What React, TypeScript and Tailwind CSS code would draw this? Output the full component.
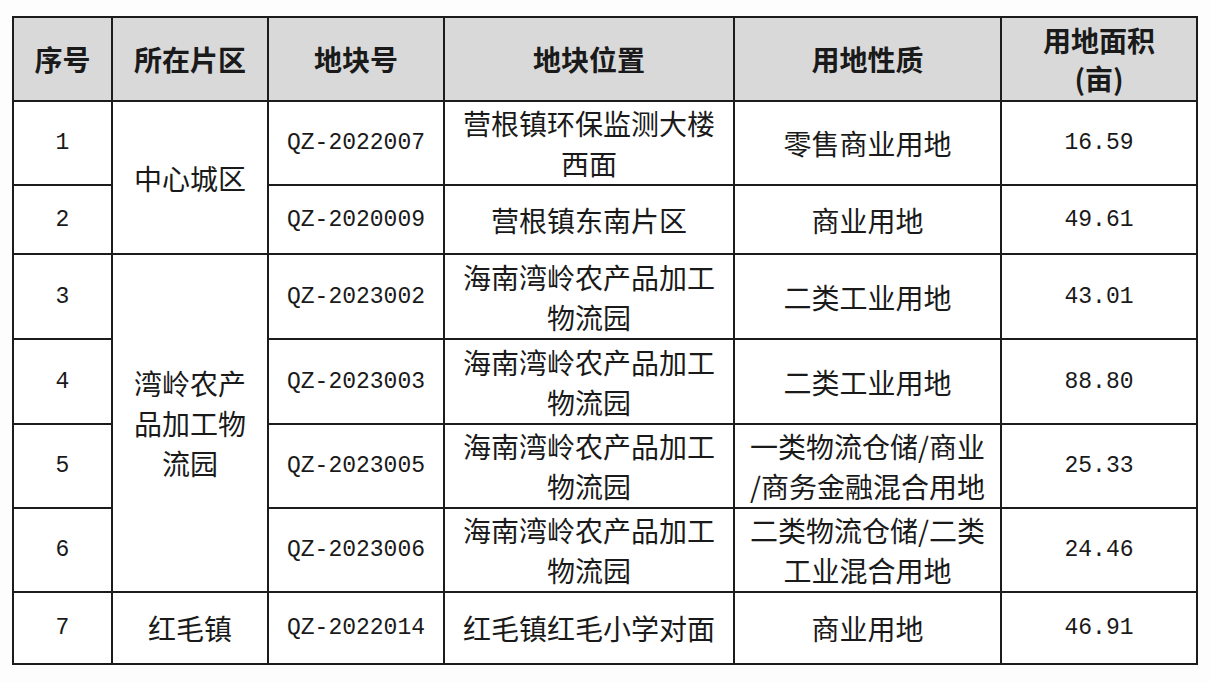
import React from "react";

const CJK = '"Noto Sans CJK SC", "Noto Sans", sans-serif';
const MONO = '"Liberation Mono", "DejaVu Sans Mono", monospace';

type Row = {
  no: string;
  area?: { text: React.ReactNode; span: number };
  code: string;
  loc: React.ReactNode;
  use: React.ReactNode;
  size: string;
  h: string;
};

const ROWS: Row[] = [
  {
    no: "1",
    area: { text: "中心城区", span: 2 },
    code: "QZ-2022007",
    loc: (
      <>
        营根镇环保监测大楼
        <br />
        西面
      </>
    ),
    use: "零售商业用地",
    size: "16.59",
    h: "h-[84px]",
  },
  { no: "2", code: "QZ-2020009", loc: "营根镇东南片区", use: "商业用地", size: "49.61", h: "h-[69px]" },
  {
    no: "3",
    area: {
      text: (
        <>
          湾岭农产
          <br />
          品加工物
          <br />
          流园
        </>
      ),
      span: 4,
    },
    code: "QZ-2023002",
    loc: (
      <>
        海南湾岭农产品加工
        <br />
        物流园
      </>
    ),
    use: "二类工业用地",
    size: "43.01",
    h: "h-[85px]",
  },
  {
    no: "4",
    code: "QZ-2023003",
    loc: (
      <>
        海南湾岭农产品加工
        <br />
        物流园
      </>
    ),
    use: "二类工业用地",
    size: "88.80",
    h: "h-[85px]",
  },
  {
    no: "5",
    code: "QZ-2023005",
    loc: (
      <>
        海南湾岭农产品加工
        <br />
        物流园
      </>
    ),
    use: (
      <>
        一类物流仓储/商业
        <br />
        /商务金融混合用地
      </>
    ),
    size: "25.33",
    h: "h-[84px]",
  },
  {
    no: "6",
    code: "QZ-2023006",
    loc: (
      <>
        海南湾岭农产品加工
        <br />
        物流园
      </>
    ),
    use: (
      <>
        二类物流仓储/二类
        <br />
        工业混合用地
      </>
    ),
    size: "24.46",
    h: "h-[84px]",
  },
  {
    no: "7",
    area: { text: "红毛镇", span: 1 },
    code: "QZ-2022014",
    loc: "红毛镇红毛小学对面",
    use: "商业用地",
    size: "46.91",
    h: "h-[72px]",
  },
];

const cell = "border-2 border-[#1c1c1c] text-center align-middle p-0";

export default function App() {
  return (
    <div className="w-[1210px] h-[682px] bg-[#fdfdfd] pt-[16px] pl-[12px]">
      <table
        className="table-fixed border-collapse w-[1184px] text-[#1a1a1a]"
        style={{ fontFamily: CJK }}
      >
        <colgroup>
          <col className="w-[99px]" />
          <col className="w-[156px]" />
          <col className="w-[176px]" />
          <col className="w-[290px]" />
          <col className="w-[267px]" />
          <col className="w-[196px]" />
        </colgroup>
        <thead>
          <tr className="h-[84px] bg-[#d9d9d9] text-[28px] font-bold leading-[38px]">
            <th className={cell}>序号</th>
            <th className={cell}>所在片区</th>
            <th className={cell}>地块号</th>
            <th className={cell}>地块位置</th>
            <th className={cell}>用地性质</th>
            <th className={cell}>
              用地面积
              <br />
              (亩)
            </th>
          </tr>
        </thead>
        <tbody className="bg-white">
          {ROWS.map((r) => (
            <tr key={r.no} className={`${r.h} text-[28px] leading-[40px]`}>
              <td className={`${cell} text-[23px]`} style={{ fontFamily: MONO }}>
                {r.no}
              </td>
              {r.area && (
                <td className={cell} rowSpan={r.area.span}>
                  {r.area.text}
                </td>
              )}
              <td className={`${cell} text-[23px]`} style={{ fontFamily: MONO }}>
                {r.code}
              </td>
              <td className={cell}>{r.loc}</td>
              <td className={cell}>{r.use}</td>
              <td className={`${cell} text-[23px]`} style={{ fontFamily: MONO }}>
                {r.size}
              </td>
            </tr>
          ))}
        </tbody>
      </table>
    </div>
  );
}
